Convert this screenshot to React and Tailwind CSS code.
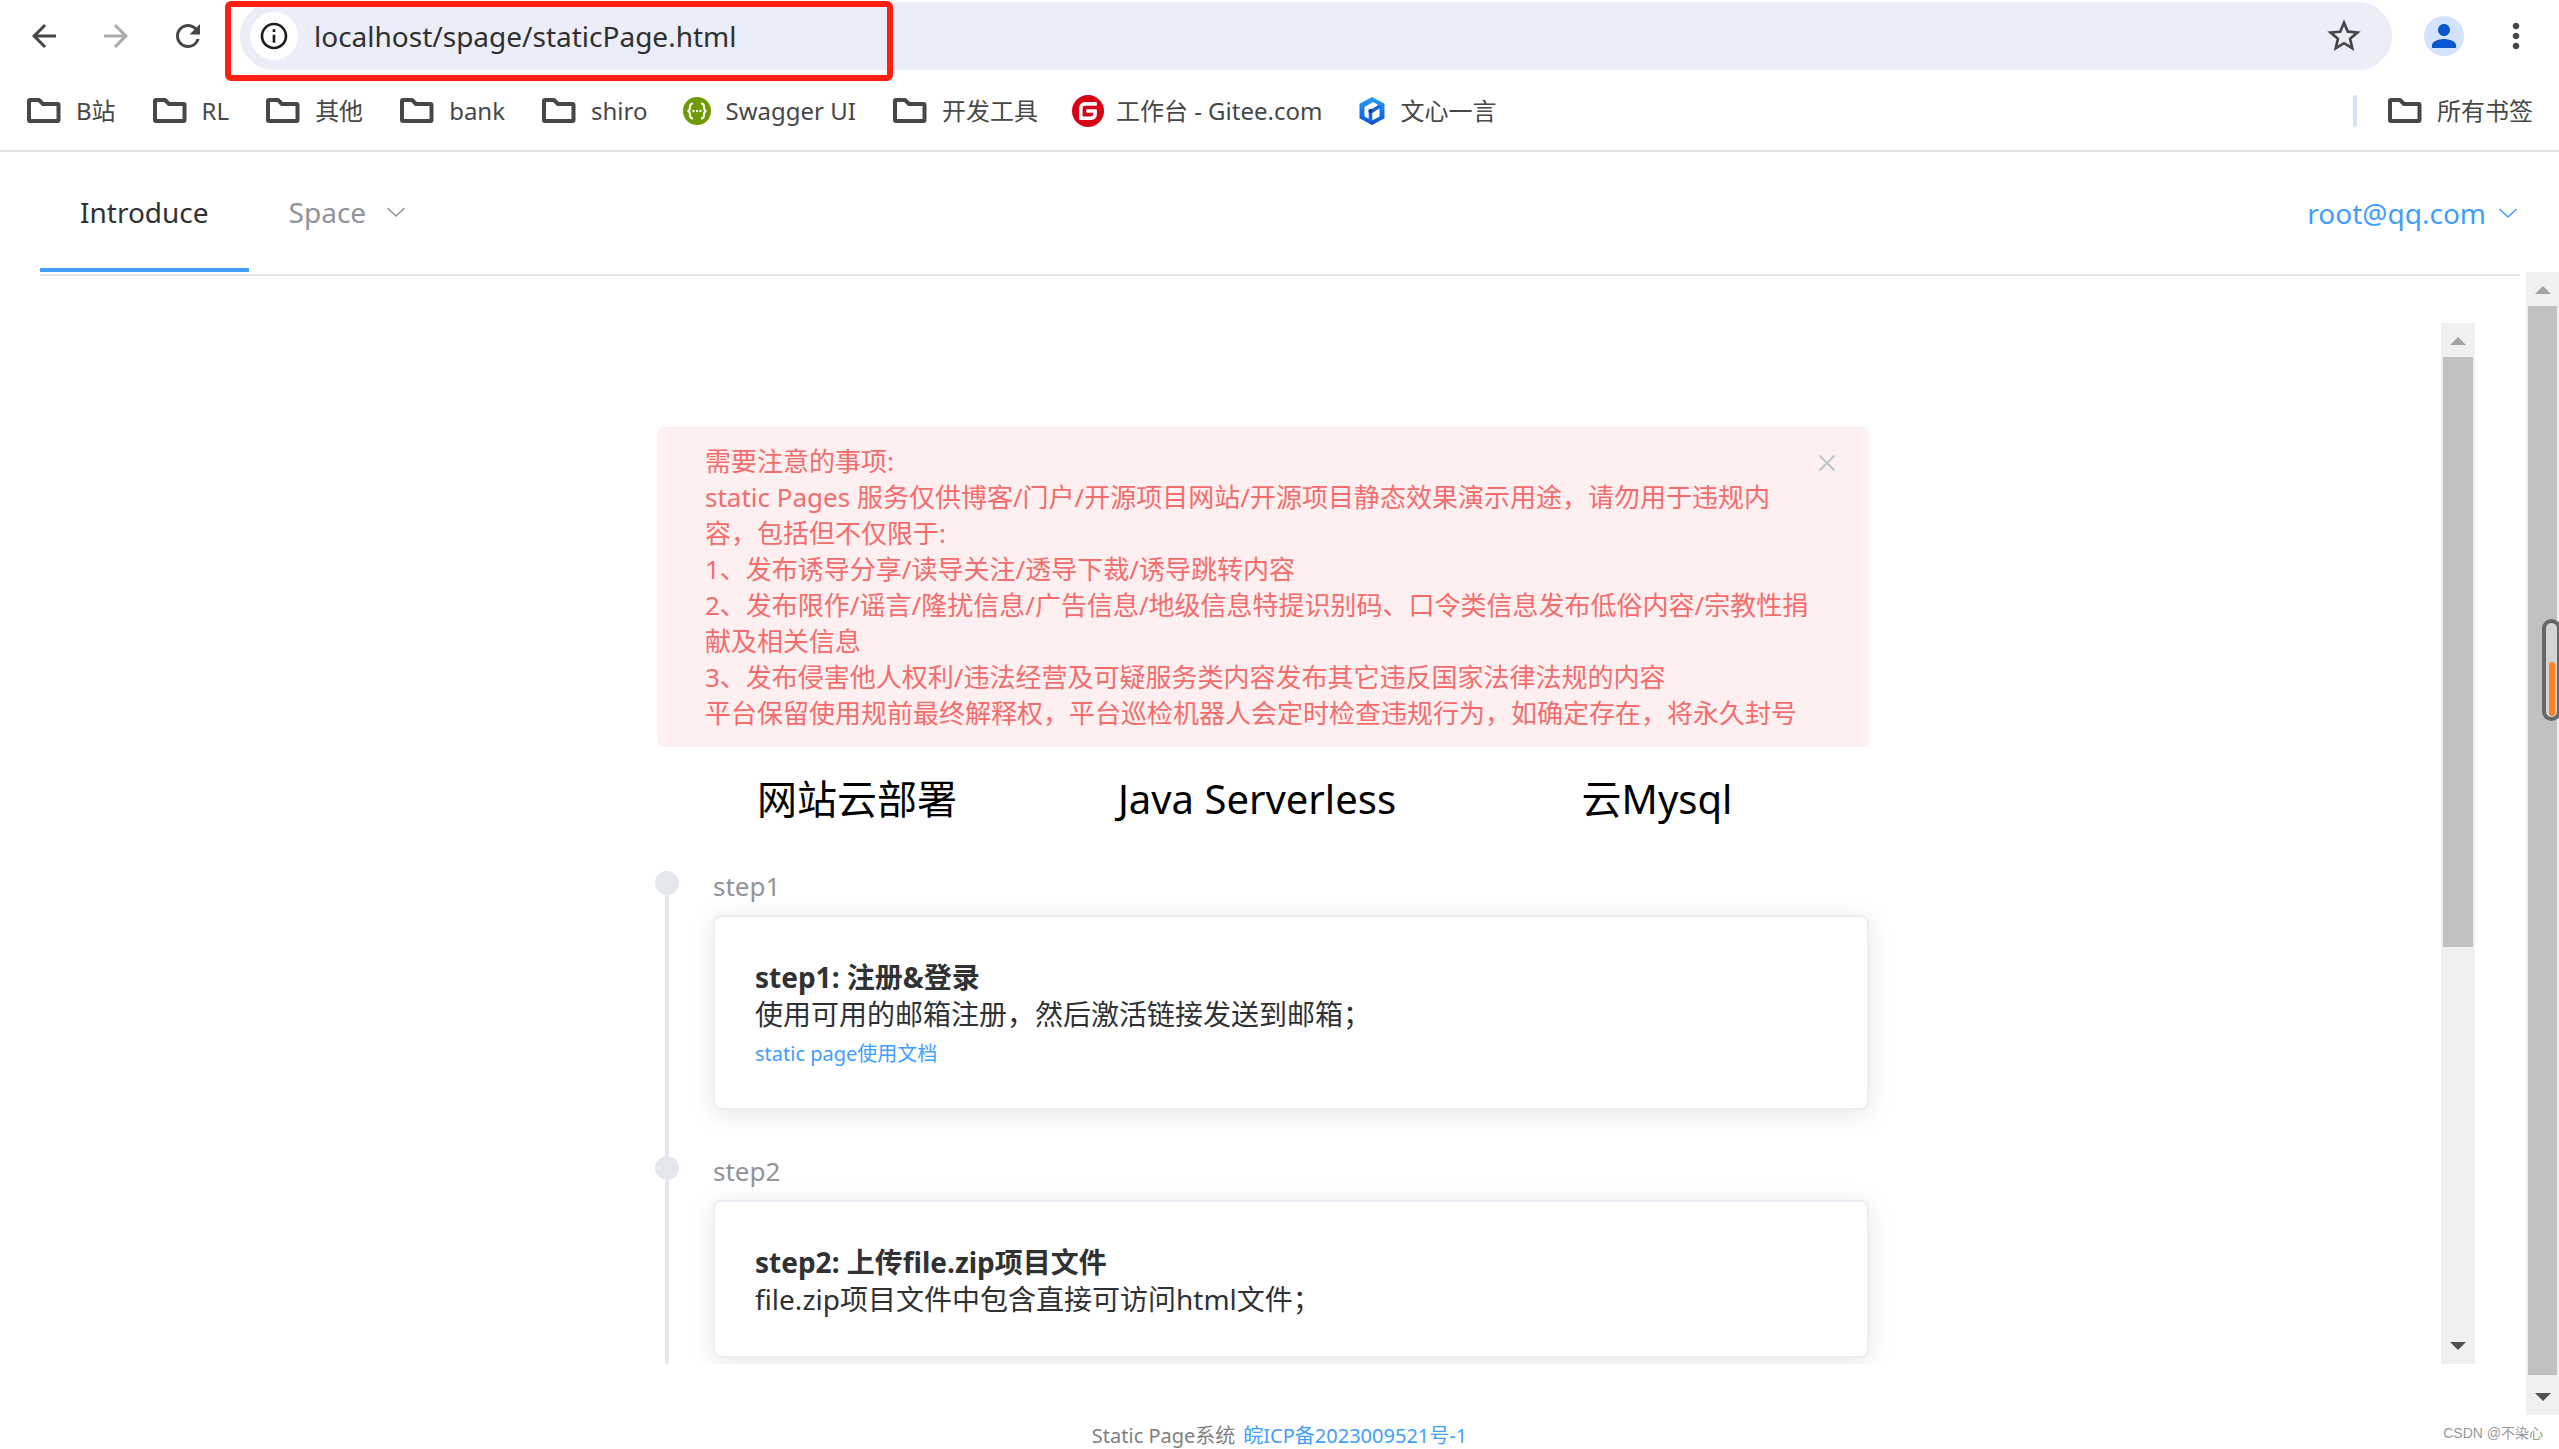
import React from 'react';
import { MdArrowBack, MdArrowForward, MdRefresh, MdInfoOutline, MdStarBorder, MdPerson, MdMoreVert } from 'react-icons/md';

const bookmarks = [
  { name: 'B站' },
  { name: 'RL' },
  { name: '其他' },
  { name: 'bank' },
  { name: 'shiro' },
  { name: 'Swagger UI', icon: 'swagger' },
  { name: '开发工具' },
  { name: '工作台 - Gitee.com', icon: 'gitee' },
  { name: '文心一言', icon: 'yiyan' },
];

const notices = [
  '需要注意的事项:',
  'static Pages 服务仅供博客/门户/开源项目网站/开源项目静态效果演示用途，请勿用于违规内',
  '容，包括但不仅限于:',
  '1、发布诱导分享/读导关注/透导下裁/诱导跳转内容',
  '2、发布限作/谣言/隆扰信息/广告信息/地级信息特提识别码、口令类信息发布低俗内容/宗教性捐',
  '献及相关信息',
  '3、发布侵害他人权利/违法经营及可疑服务类内容发布其它违反国家法律法规的内容',
  '平台保留使用规前最终解释权，平台巡检机器人会定时检查违规行为，如确定存在，将永久封号',
];

const steps = [
  {
    stamp: 'step1',
    title: 'step1: 注册&登录',
    text: '使用可用的邮箱注册，然后激活链接发送到邮箱；',
    link: 'static page使用文档',
  },
  {
    stamp: 'step2',
    title: 'step2: 上传file.zip项目文件',
    text: 'file.zip项目文件中包含直接可访问html文件；',
  },
];

const FolderIcon = () => (
  <svg viewBox="0 0 40 40" className="w-10 h-10 shrink-0" fill="none" stroke="#474747" strokeWidth="4" strokeLinejoin="round">
    <path d="M6 9 h9 l4 4 h14.500 a1 1 0 0 1 1 1 v15 a1 1 0 0 1 -1 1 h-27.500 a1 1 0 0 1 -1 -1 v-19 a1 1 0 0 1 1 -1 z" />
  </svg>
);

const SwaggerIcon = () => (
  <svg viewBox="0 0 32 32" className="w-8 h-8 shrink-0" fill="none">
    <circle cx="16" cy="16" r="14" fill="#6d9a00" />
    <g stroke="#fff" strokeWidth="2">
      <path d="M12 8.500 c-2.400 0 -3 1 -3 3 c0 2.600 0 4.100 -2.400 4.500 c2.400 0.400 2.400 1.900 2.400 4.500 c0 2 0.600 3 3 3" />
      <path d="M20 8.500 c2.400 0 3 1 3 3 c0 2.600 0 4.100 2.400 4.500 c-2.400 0.400 -2.400 1.900 -2.400 4.500 c0 2 -0.600 3 -3 3" />
    </g>
    <g fill="#fff">
      <circle cx="12.500" cy="16" r="1.200" />
      <circle cx="16" cy="16" r="1.200" />
      <circle cx="19.500" cy="16" r="1.200" />
    </g>
  </svg>
);

const GiteeIcon = () => (
  <svg viewBox="0 0 32 32" className="w-8 h-8 shrink-0" fill="none">
    <circle cx="16" cy="16" r="16" fill="#d80013" />
    <path
      d="M24.100 14.200 H15 a0.800 0.800 0 0 0 -0.800 0.800 v2 a0.800 0.800 0 0 0 0.800 0.800 h5.500 a0.800 0.800 0 0 1 0.800 0.800 v0.400 a2.400 2.400 0 0 1 -2.400 2.400 h-7.500 a0.800 0.800 0 0 1 -0.800 -0.800 v-7.500 a2.400 2.400 0 0 1 2.400 -2.400 h11.100 a0.800 0.800 0 0 0 0.800 -0.800 v-2 a0.800 0.800 0 0 0 -0.800 -0.800 h-11.100 a5.900 5.900 0 0 0 -5.900 5.900 v11.100 a0.800 0.800 0 0 0 0.800 0.800 h11.700 a5.300 5.300 0 0 0 5.300 -5.300 v-4.600 a0.800 0.800 0 0 0 -0.800 -0.800 z"
      fill="#fff"
    />
  </svg>
);

const YiyanIcon = () => (
  <svg viewBox="0 0 32 32" className="w-8 h-8 shrink-0" fill="none">
    <defs>
      <linearGradient id="yiyan" x1="0" y1="0" x2="0" y2="1">
        <stop offset="0" stopColor="#25a0ff" />
        <stop offset="1" stopColor="#0a4fd0" />
      </linearGradient>
    </defs>
    <path d="M16 2 L28.500 8.800 V23.200 L16 30 L3.500 23.200 V8.800 Z" fill="url(#yiyan)" />
    <path d="M17 7 L23.500 10.500 V21.500 L16 25.500 L8.500 21.500 V12 Z" fill="#fff" />
    <path d="M14.500 27 V17 L24 11" stroke="#1268de" strokeWidth="3.500" />
    <circle cx="14.500" cy="16" r="2.200" fill="#0a3f9e" />
  </svg>
);

const bookmarkIcons = { swagger: SwaggerIcon, gitee: GiteeIcon, yiyan: YiyanIcon };

const Bookmark = ({ name, icon }) => {
  const Icon = bookmarkIcons[icon] || FolderIcon;
  return (
    <a href="#" className="flex items-center gap-3 whitespace-nowrap">
      <Icon />
      {name}
    </a>
  );
};

const Chevron = () => (
  <svg viewBox="0 0 20 12" className="w-5 h-3 shrink-0" fill="none" stroke="currentColor" strokeWidth="1.5">
    <path d="M1.500 2 L10 10 L18.500 2" />
  </svg>
);

const Scrollbar = ({ thumb }) => (
  <div className="h-full flex flex-col bg-[#f0f0f0] px-[2px]">
    <svg viewBox="0 0 30 34" className="w-[30px] h-[34px] shrink-0">
      <path d="M15 14 L23 22 H7 Z" fill="#a3a3a3" />
    </svg>
    <div className="flex-1 min-h-0">
      <div className="bg-[#c1c1c1]" style={{ height: `${thumb}%` }} />
    </div>
    <svg viewBox="0 0 30 34" className="w-[30px] h-[34px] shrink-0">
      <path d="M7 12 H23 L15 20 Z" fill="#505050" />
    </svg>
  </div>
);

const BrowserBar = () => (
  <header className="relative border-b-2 border-[#e3e3e3] text-[#474747]">
    <div className="flex items-center h-[72px] pl-2 pr-[23px]">
      <button aria-label="Back" className="w-[72px] flex justify-center"><MdArrowBack className="w-9 h-9" /></button>
      <button aria-label="Forward" className="w-[72px] flex justify-center text-[#ababab]"><MdArrowForward className="w-9 h-9" /></button>
      <button aria-label="Reload" className="w-[72px] flex justify-center"><MdRefresh className="w-9 h-9" /></button>
      <div className="flex-1 flex items-center h-[68px] ml-4 pl-[10px] pr-7 rounded-full bg-[#ebeef8]">
        <button aria-label="Site information" className="w-12 h-12 rounded-full bg-white text-[#1f1f1f] flex items-center justify-center">
          <MdInfoOutline className="w-8 h-8" />
        </button>
        <input
          aria-label="Address"
          defaultValue="localhost/spage/staticPage.html"
          className="flex-1 ml-4 bg-transparent outline-none text-[28px] leading-10 text-[#303030]"
        />
        <button aria-label="Bookmark this page"><MdStarBorder className="w-10 h-10" /></button>
      </div>
      <button aria-label="Profile" className="w-10 h-10 ml-8 rounded-full bg-[#d3e3fd] text-[#0b57d0] flex items-center justify-center">
        <MdPerson className="w-9 h-9" />
      </button>
      <button aria-label="Menu" className="ml-8"><MdMoreVert className="w-10 h-10" /></button>
    </div>
    <nav className="flex items-center h-[78px] pl-6 pr-[26px] gap-[34px] text-[24px] leading-8">
      {bookmarks.map((b) => (
        <Bookmark key={b.name} {...b} />
      ))}
      <div className="flex items-center gap-7 ml-auto">
        <span className="w-1 h-8 rounded-full bg-[#d3e3fd]" />
        <Bookmark name="所有书签" />
      </div>
    </nav>
    <div className="absolute left-[225px] top-px w-[668px] h-20 rounded-md border-6 border-[#ff1f12] pointer-events-none" />
  </header>
);

const SiteNav = () => (
  <nav className="flex items-stretch justify-between h-[124px] ml-10 mr-[6px] border-b-2 border-[#e6e6e6] text-[28px] leading-10">
    <div className="flex">
      <a href="#" className="flex items-center h-[120px] px-10 pt-1 border-b-4 border-[#409eff] text-[#303133]">Introduce</a>
      <button className="flex items-center h-[120px] px-10 gap-5 text-[#909399]">
        Space
        <Chevron />
      </button>
    </div>
    <button className="flex items-center gap-3 pr-[2px] text-[#409eff]">
      root@qq.com
      <Chevron />
    </button>
  </nav>
);

const Notice = () => (
  <div className="relative rounded-lg bg-[#fef0f0] text-[#f56c6c] pl-12 pr-8 py-4 text-[26px] leading-9">
    {notices.map((line) => (
      <p key={line} className="whitespace-nowrap">{line}</p>
    ))}
    <button aria-label="Close" className="absolute right-[30px] top-6 text-[#c0c4cc]">
      <svg viewBox="0 0 24 24" className="w-6 h-6" fill="none" stroke="currentColor" strokeWidth="2">
        <path d="M4.500 4.500 L19.500 19.500 M19.500 4.500 L4.500 19.500" />
      </svg>
    </button>
  </div>
);

const Step = ({ stamp, title, text, link }) => (
  <li className="flex">
    <div className="w-6 shrink-0 flex flex-col items-center">
      <span className="w-6 h-6 rounded-full bg-[#e4e7ed]" />
      <span className="w-1 flex-1 bg-[#e4e7ed]" />
    </div>
    <div className="flex-1 ml-[34px] pb-[46px]">
      <div className="h-11 text-[26px] leading-[30px] text-[#909399]">{stamp}</div>
      <div className="rounded-lg border-2 border-[#ebeef5] bg-white px-10 pt-[42px] pb-[38px] shadow-[0_4px_24px_rgba(0,0,0,0.1)] text-[28px] leading-[37px] text-[#303133]">
        <h3 className="font-bold">{title}</h3>
        <p>{text}</p>
        {link && (
          <a href="#" className="block pt-[5px] text-[20px] leading-8 text-[#409eff]">{link}</a>
        )}
      </div>
    </div>
  </li>
);

export default function App() {
  return (
    <div className="relative h-screen flex flex-col overflow-hidden bg-white font-['Noto_Sans','Noto_Sans_CJK_SC',sans-serif]">
      <BrowserBar />
      <div className="flex-1 min-h-0 flex">
        <div className="flex-1 min-w-0 flex flex-col">
          <SiteNav />
          <main className="flex-1 min-h-0 mt-[47px] mb-[51px] mx-[51px] grid grid-cols-[34px_1fr_34px]">
            <div className="col-start-2 min-h-0 overflow-hidden pt-[104px]">
              <div className="w-[1212px] mx-auto">
                <Notice />
                <div className="grid grid-cols-3 mt-6 mr-3 text-center text-[40px] leading-[56px] text-black">
                  <h2>网站云部署</h2>
                  <h2>Java Serverless</h2>
                  <h2>云Mysql</h2>
                </div>
                <ul className="mt-11 -ml-[2px]">
                  {steps.map((s) => (
                    <Step key={s.stamp} {...s} />
                  ))}
                </ul>
              </div>
            </div>
            <Scrollbar thumb={60.6} />
          </main>
        </div>
        <div className="mt-[120px] w-[33px]">
          <Scrollbar thumb={99.4} />
        </div>
      </div>
      <footer className="h-[34px] pt-[5px] flex justify-center gap-2 text-[20px] leading-8 text-[#808080]">
        <span>Static Page系统</span>
        <a href="#" className="text-[#409eff]">皖ICP备2023009521号-1</a>
      </footer>
      <span className="absolute right-4 bottom-[6px] text-[14px] leading-5 text-[#999] font-['Liberation_Sans','Noto_Sans_CJK_SC',sans-serif]">CSDN @不染心</span>
      <div className="absolute -right-[2px] top-[619px] w-[19px] h-[102px] rounded-full border-4 border-[#666] bg-[#d4d4d4] flex items-end justify-center pb-px">
        <span className="w-[6px] h-[54px] rounded-full bg-[#ff7f27]" />
      </div>
    </div>
  );
}
